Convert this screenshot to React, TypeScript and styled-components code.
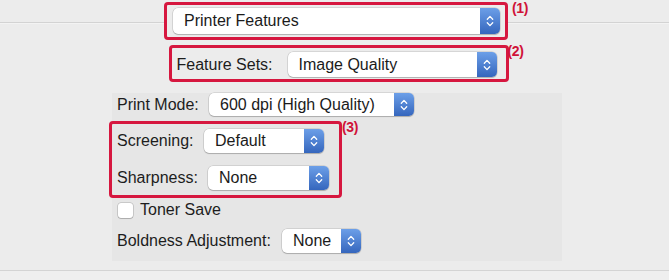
import styled, { createGlobalStyle } from "styled-components";

const GlobalStyle = createGlobalStyle`
  html, body {
    margin: 0;
    padding: 0;
    background: #ececec;
  }
  body {
    font-family: "Liberation Sans", Arial, sans-serif;
    color: #1d1d1d;
  }
`;

interface SelectProps {
  value: string;
  width: number;
  height?: number;
}

const Select: React.FC<SelectProps> = ({ value, width, height = 24 }) => {
  return (
    <StyledSelect width={width} height={height}>
      <Value>{value}</Value>
      <Stepper>
        <svg width="10" height="16" viewBox="0 0 10 16">
          <path
            d="M2.3 6.2 L5 3.4 L7.7 6.2 M2.3 9.8 L5 12.6 L7.7 9.8"
            fill="none"
            stroke="#fff"
            strokeWidth="1.3"
            strokeLinecap="round"
            strokeLinejoin="round"
          />
        </svg>
      </Stepper>
    </StyledSelect>
  );
};

const App: React.FC = () => {
  return (
    <Page>
      <GlobalStyle />
      <Header>
        <Callout width={344} height={38} pad="3px 5px 3px 6px" offset={3}>
          <Select value="Printer Features" width={327} height={26} />
          <Tag gap={7}>(1)</Tag>
        </Callout>
        <Callout width={340} height={37} pad="4px 9px 2px 5px" offset={8} top={5}>
          <Label width={111}>Feature Sets:</Label>
          <Select value="Image Quality" width={209} height={25} />
          <Tag gap={2}>(2)</Tag>
        </Callout>
      </Header>
      <Panel>
        <Row height={23}>
          <Label width={92}>Print Mode:</Label>
          <Select value="600 dpi (High Quality)" width={205} height={23} />
        </Row>
        <Group>
          <Row height={24}>
            <Label width={87}>Screening:</Label>
            <Select value="Default" width={120} />
          </Row>
          <Row height={24}>
            <Label width={91}>Sharpness:</Label>
            <Select value="None" width={121} />
          </Row>
          <Tag gap={3}>(3)</Tag>
        </Group>
        <CheckRow>
          <Checkbox />
          <span>Toner Save</span>
        </CheckRow>
        <Row height={24} top={11}>
          <Label width={165}>Boldness Adjustment:</Label>
          <Select value="None" width={79} />
        </Row>
      </Panel>
      <Footer />
    </Page>
  );
};

const Page = styled.div`
  width: 669px;
  height: 280px;
  display: flex;
  flex-direction: column;
  overflow: hidden;
  font-size: 16px;
`;

const Header = styled.div`
  display: flex;
  flex-direction: column;
  align-items: center;
  padding-top: 2px;
  background: linear-gradient(
    to bottom,
    transparent 22px,
    #d3d3d3 22px,
    #d3d3d3 23px,
    #f3f3f3 23px,
    #f3f3f3 24px,
    transparent 24px
  );
`;

interface CalloutProps {
  width: number;
  height: number;
  pad: string;
  offset: number;
  top?: number;
}

const Callout = styled.div<CalloutProps>`
  position: relative;
  box-sizing: border-box;
  width: ${(p) => p.width}px;
  height: ${(p) => p.height}px;
  margin-top: ${(p) => p.top ?? 0}px;
  margin-left: ${(p) => p.offset}px;
  padding: ${(p) => p.pad};
  display: flex;
  align-items: center;
  border: 3px solid #d6173f;
  border-radius: 4px;
  background: #ececec;
`;

interface TagProps {
  gap: number;
}

const Tag = styled.span<TagProps>`
  position: absolute;
  top: -5px;
  left: calc(100% + ${(p) => p.gap}px);
  color: #d01238;
  font-weight: bold;
  font-size: 14px;
  letter-spacing: -0.3px;
`;

interface StyledSelectProps {
  width: number;
  height: number;
}

const StyledSelect = styled.div<StyledSelectProps>`
  box-sizing: border-box;
  width: ${(p) => p.width}px;
  height: ${(p) => p.height}px;
  display: flex;
  align-items: stretch;
  background: #fff;
  border-radius: 5px;
  box-shadow: 0 0 0 0.5px rgba(0, 0, 0, 0.18), 0 1px 1px rgba(0, 0, 0, 0.18);
  overflow: hidden;
  flex-shrink: 0;
`;

const Value = styled.span`
  flex: 1;
  display: flex;
  align-items: center;
  padding-left: 11px;
  font-size: 16px;
  color: #1b1b1b;
  white-space: nowrap;
`;

const Stepper = styled.span`
  width: 20px;
  display: flex;
  align-items: center;
  justify-content: center;
  background: linear-gradient(to bottom, #6c9fe8, #3566bd);
`;

interface LabelProps {
  width: number;
}

const Label = styled.span<LabelProps>`
  width: ${(p) => p.width}px;
  flex-shrink: 0;
  white-space: nowrap;
  color: #1d1d1d;
`;

const Panel = styled.div`
  box-sizing: border-box;
  width: 450px;
  height: 168px;
  margin: 11px 0 0 112px;
  padding-left: 5px;
  display: flex;
  flex-direction: column;
  background: #e6e6e6;
`;

interface RowProps {
  height: number;
  top?: number;
}

const Row = styled.div<RowProps>`
  display: flex;
  align-items: center;
  height: ${(p) => p.height}px;
  margin-top: ${(p) => p.top ?? 0}px;
`;

const Group = styled.div`
  position: relative;
  box-sizing: border-box;
  width: 233px;
  height: 77px;
  margin: 5px 0 0 -8px;
  padding: 5px 0 5px 5px;
  display: flex;
  flex-direction: column;
  justify-content: space-between;
  border: 3px solid #d6173f;
  border-radius: 4px;
`;

const CheckRow = styled.label`
  display: flex;
  align-items: center;
  gap: 7px;
  height: 16px;
  margin-top: 4px;
  margin-left: 1px;
`;

const Checkbox = styled.span`
  box-sizing: border-box;
  width: 15px;
  height: 15px;
  background: #fff;
  border-radius: 3px;
  box-shadow: 0 0 0 0.5px rgba(0, 0, 0, 0.25), 0 1px 1px rgba(0, 0, 0, 0.15);
`;

const Footer = styled.div`
  margin-top: 9px;
  flex: 1;
  border-top: 1px solid #d4d4d4;
  background: #efefef;
`;

export default App;
